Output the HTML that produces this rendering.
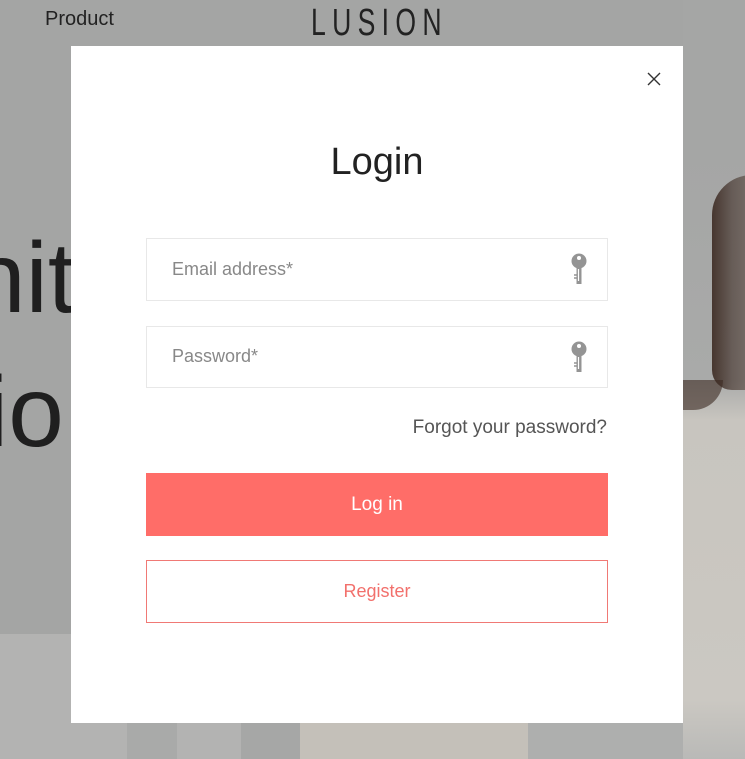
<!DOCTYPE html>
<html><head><style>
*{margin:0;padding:0;box-sizing:border-box}
body{width:745px;height:759px;overflow:hidden;background:#a4a5a4;font-family:"Liberation Sans",sans-serif;position:relative}
.abs{position:absolute}
</style></head><body>
<div class="abs" style="left:0;top:634px;width:745px;height:125px;background:#b3b3b2"></div>
<div class="abs" style="left:127px;top:634px;width:50px;height:125px;background:#a9aaa9"></div>
<div class="abs" style="left:241px;top:634px;width:60px;height:125px;background:#a6a7a6"></div>
<div class="abs" style="left:300px;top:715px;width:230px;height:44px;background:#c4c0b9"></div>
<div class="abs" style="left:528px;top:634px;width:160px;height:125px;background:#aeafae"></div>
<div class="abs" style="left:683px;top:0;width:62px;height:759px;background:linear-gradient(#a5a6a5 0,#a5a6a5 150px,#a9aaa9 380px,#c8c5bf 420px,#cbc8c2 700px,#b9b9b7 759px)"></div>
<div class="abs" style="left:712px;top:175px;width:50px;height:215px;background:linear-gradient(90deg,rgba(60,42,34,0.9),rgba(60,42,34,0.6) 40%,rgba(90,70,60,0.5));border-radius:40px 0 0 20px"></div>
<div class="abs" style="left:683px;top:380px;width:40px;height:30px;background:rgba(60,42,34,0.6);border-radius:0 0 30px 0"></div>
<div class="abs" style="left:45px;top:8px;font-size:20px;color:#222">Product</div>
<div class="abs" style="left:311px;top:2px;font-size:38px;color:#222;letter-spacing:9px;transform:scaleX(0.7);transform-origin:left">LUSION</div>
<div class="abs" style="left:-30px;top:228px;font-size:100px;color:#1f1f1f;line-height:100px">nit</div>
<div class="abs" style="left:-14px;top:362px;font-size:100px;color:#1f1f1f;line-height:100px">io</div>
<div class="abs" style="left:71px;top:46px;width:612px;height:677px;background:#fff">
  <svg class="abs" style="left:575px;top:25px" width="16" height="16"><path d="M2 2L14 14M14 2L2 14" stroke="#333" stroke-width="1.4"/></svg>
  <div class="abs" style="left:0;width:612px;top:95px;text-align:center;font-size:38px;color:#222">Login</div>
  <div class="abs" style="left:75px;top:192px;width:462px;height:63px;border:1px solid #e8e8e8"></div>
  <div class="abs" style="left:101px;top:213px;font-size:18px;color:#888">Email address*</div>
  <div class="abs" style="left:75px;top:280px;width:462px;height:62px;border:1px solid #e8e8e8"></div>
  <div class="abs" style="left:101px;top:300px;font-size:18px;color:#888">Password*</div>
  <svg class="abs" style="left:500px;top:207px" width="16" height="32"><circle cx="8" cy="8" r="7.5" fill="#949494"/><circle cx="8" cy="5" r="2" fill="#fff"/><rect x="5.5" y="12" width="5" height="19" fill="#949494"/><path d="M7.5 16V28" stroke="#fff" stroke-width="1.2"/><path d="M3 22h2.5M3 25h2.5" stroke="#949494" stroke-width="1.5"/></svg>
  <svg class="abs" style="left:500px;top:295px" width="16" height="32"><circle cx="8" cy="8" r="7.5" fill="#949494"/><circle cx="8" cy="5" r="2" fill="#fff"/><rect x="5.5" y="12" width="5" height="19" fill="#949494"/><path d="M7.5 16V28" stroke="#fff" stroke-width="1.2"/><path d="M3 22h2.5M3 25h2.5" stroke="#949494" stroke-width="1.5"/></svg>
  <div class="abs" style="right:76px;top:371px;font-size:19px;color:#555">Forgot your password?</div>
  <div class="abs" style="left:75px;top:427px;width:462px;height:63px;background:#ff6d68;color:#fff;font-size:19px;text-align:center;line-height:63px">Log in</div>
  <div class="abs" style="left:75px;top:514px;width:462px;height:63px;border:1px solid #f07975;color:#f2706c;font-size:18px;text-align:center;line-height:61px">Register</div>
</div>
</body></html>
